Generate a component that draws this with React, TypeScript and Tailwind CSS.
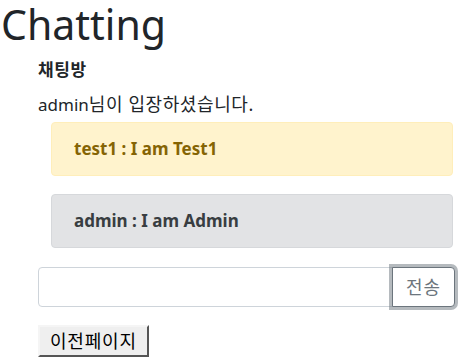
export default function App() {
  const messages = [
    { text: 'test1 : I am Test1', box: 'bg-[#fff3cd] border-[#ffeeba] text-[#856404]' },
    { text: 'admin : I am Admin', box: 'bg-[#e2e3e5] border-[#d6d8db] text-[#383d41]' },
  ];

  return (
    <div className="w-[460px] h-[361px] bg-white text-[#212529] font-['Noto_Sans','Noto_Sans_CJK_KR',sans-serif] overflow-hidden">
      <h1 className="text-[41px] leading-[48px] font-normal ml-[1px]">Chatting</h1>
      <div className="pl-[38px] pr-[5px]">
        <div className="font-bold text-[17px] leading-6 mt-[10px] tracking-[0.6px]">채팅방</div>
        <div className="text-[17px] leading-6 mt-[10px]">
          admin<span className="text-[18px] tracking-[0.6px]">님이 입장하셨습니다.</span>
        </div>

        <div className="ml-[13px] mr-[2px] mt-[5px] flex flex-col gap-[18px]">
          {messages.map(m => (
            <div key={m.text} className={`h-[54px] border rounded flex items-center pl-[22px] font-bold text-[17px] ${m.box}`}>
              {m.text}
            </div>
          ))}
        </div>

        <div className="mt-[19px] flex items-stretch h-[40px]">
          <input
            type="text"
            className="flex-1 min-w-0 border border-[#ced4da] rounded-l-[4px] px-3 outline-none"
          />
          <button className="w-[63px] -ml-px border border-[#6c757d] rounded-r-[4px] text-[#6c757d] text-[18px] tracking-[1px] shadow-[0_0_0_3px_rgba(108,117,125,0.5)] bg-white">
            전송
          </button>
        </div>

        <button className="mt-[18px] h-[32px] px-[10px] bg-[#efefef] text-black text-[18px] tracking-[0.8px] border-2 border-t-[#f5f5f5] border-l-[#f5f5f5] border-r-[#555] border-b-[#555]">
          이전페이지
        </button>
      </div>
    </div>
  );
}
